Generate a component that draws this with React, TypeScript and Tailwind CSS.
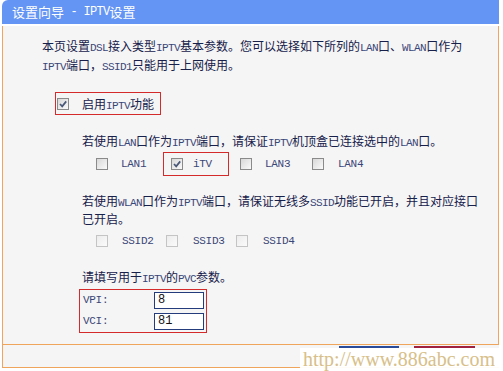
import React from 'react';

// Latin runs use a narrow mono face so they come out half-width, like the router UI's SimSun.
const Mix: React.FC<{ text: string; latin?: string }> = ({
  text,
  latin = "font-['Liberation_Mono',monospace] text-[11px] tracking-[-0.6px] text-[#3a4677]",
}) => {
  const parts = text.split(/([\x20-\x7E]+)/).filter(Boolean);
  return (
    <>
      {parts.map((p, i) =>
        /^[\x20-\x7E]+$/.test(p) ? (
          <span key={i} className={latin + ' whitespace-pre leading-none'}>
            {p}
          </span>
        ) : (
          <span key={i}>{p}</span>
        )
      )}
    </>
  );
};

const Box: React.FC<{ checked?: boolean; disabled?: boolean }> = ({ checked, disabled }) => (
  <span
    className={
      disabled
        ? 'inline-flex w-[12px] h-[12px] shrink-0 border border-[#c4c4c4] bg-linear-to-br from-[#ececec] to-[#fbfbfb]'
        : 'inline-flex w-[12px] h-[12px] shrink-0 border border-[#8a8a8a] bg-linear-to-br from-[#d8d8d8] to-[#fafafa]'
    }
  >
    {checked && (
      <svg viewBox="0 0 10 10" className="w-[10px] h-[10px]">
        <path d="M2 5 L4.2 7.4 L8.2 2.4" fill="none" stroke="#4a5878" strokeWidth="1.7" />
      </svg>
    )}
  </span>
);

const Item: React.FC<{ label: string; checked?: boolean; disabled?: boolean; gap: string; w: string }> = ({
  label,
  checked,
  disabled,
  gap,
  w,
}) => (
  <div className={'flex items-center ' + w}>
    <Box checked={checked} disabled={disabled} />
    <span className={"font-['Liberation_Mono',monospace] text-[11px] tracking-[-0.3px] text-[#3a4677] " + gap}>
      {label}
    </span>
  </div>
);

export default function App() {
  return (
    <div className="relative w-[503px] h-[371px] bg-white overflow-hidden font-['Noto_Sans_CJK_SC',sans-serif] text-[12px] text-[#16204a]">
      <div className="ml-[2px] w-[497px] h-[24px] bg-[#6495f5] rounded-tl-[6px] flex items-center pl-[10px] text-white text-[13px]">
        <Mix
          text="设置向导 - IPTV设置"
          latin="font-['Liberation_Mono',monospace] text-[12px] tracking-[-0.7px]"
        />
      </div>
      <div className="h-[2px]" />

      <div className="ml-[2px] w-[497px] h-[319px] border-l border-r border-b border-[#efa55c] bg-[#f5f5f5] pt-[10px]">
        <p className="ml-[39px] h-[38px] leading-[19px]">
          <Mix text="本页设置DSL接入类型IPTV基本参数。您可以选择如下所列的LAN口、WLAN口作为" />
          <br />
          <Mix text="IPTV端口，SSID1只能用于上网使用。" />
        </p>

        <div className="mt-[18px] ml-[52px] w-[106px] h-[23px] border border-[#d42a2a] flex items-center pl-[1px]">
          <Box checked />
          <span className="ml-[13px]">
            <Mix text="启用IPTV功能" />
          </span>
        </div>

        <p className="mt-[17px] ml-[79px] h-[18px] leading-[18px]">
          <Mix text="若使用LAN口作为IPTV端口，请保证IPTV机顶盒已连接选中的LAN口。" />
        </p>

        <div className="mt-[2px] ml-[93px] h-[24px] flex items-center">
          <Item label="LAN1" gap="ml-[13px]" w="w-[67px]" />
          <div className="w-[66px] h-[24px] border border-[#d42a2a] flex items-center pl-[7px]">
            <Box checked />
            <span className="ml-[10px] font-['Liberation_Mono',monospace] text-[11px] tracking-[-0.3px] text-[#3a4677]">
              iTV
            </span>
          </div>
          <div className="w-[11px]" />
          <Item label="LAN3" gap="ml-[13px]" w="w-[72px]" />
          <Item label="LAN4" gap="ml-[14px]" w="w-[72px]" />
        </div>

        <p className="mt-[16px] ml-[79px] h-[36px] leading-[18px]">
          <Mix text="若使用WLAN口作为IPTV端口，请保证无线多SSID功能已开启，并且对应接口" />
          <br />
          <Mix text="已开启。" />
        </p>

        <div className="mt-[4px] ml-[93px] h-[18px] flex items-center">
          <Item label="SSID2" disabled gap="ml-[14px]" w="w-[70px]" />
          <Item label="SSID3" disabled gap="ml-[15px]" w="w-[70px]" />
          <Item label="SSID4" disabled gap="ml-[15px]" w="w-[70px]" />
        </div>

        <p className="mt-[18px] ml-[79px] h-[18px] leading-[18px]">
          <Mix text="请填写用于IPTV的PVC参数。" />
        </p>

        <div className="mt-[3px] ml-[76px] w-[128px] border border-[#d42a2a] pl-[3px] pt-[2px] pb-[2px] flex flex-col gap-[4px]">
          {[
            ['VPI:', '8'],
            ['VCI:', '81'],
          ].map(([k, v]) => (
            <div key={k} className="flex items-center h-[17px]">
              <span className="w-[71px] font-['Liberation_Mono',monospace] text-[11px] tracking-[-0.3px] text-[#3a4677]">
                {k}
              </span>
              <div className="w-[50px] h-[17px] border border-[#243c7c] bg-white pl-[3px] font-['Liberation_Mono',monospace] text-[12px] leading-[15px] text-[#111]">
                {v}
              </div>
            </div>
          ))}
        </div>
      </div>

      <div className="ml-[2px] w-[497px] h-[23px] border-l border-b border-[#efa55c] bg-[#f5f5f5] flex justify-end items-start pr-[24px] gap-[15px] pt-[1px]">
        <div className="w-[60px] h-[20px] border-t-2 border-[#2a4a9a] bg-[#efefef]" />
        <div className="w-[61px] h-[20px] border-t-2 border-[#a02040] bg-[#efefef]" />
      </div>

      <div className="absolute right-0 bottom-0 w-[203px] h-[23px] bg-white/95 pl-[3px] font-['Liberation_Serif',serif] text-[20px] leading-[23px] text-[#d8c08a]">
        http://www.886abc.com
      </div>
    </div>
  );
}
